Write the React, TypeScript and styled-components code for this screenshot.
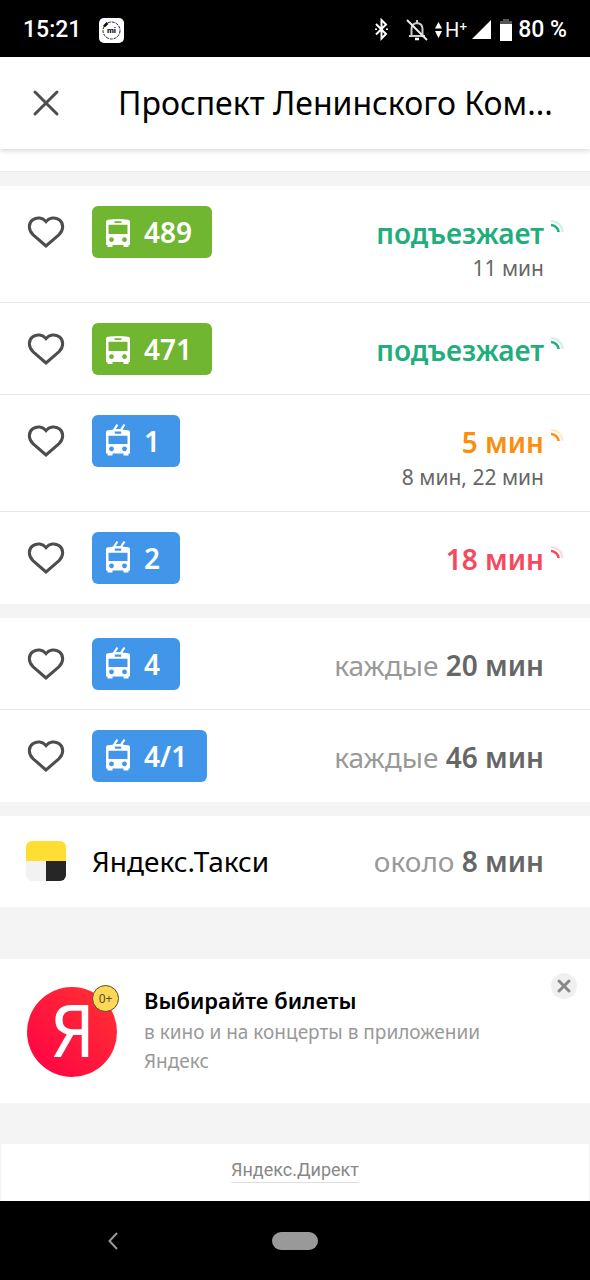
import React from "react";
import styled, { createGlobalStyle } from "styled-components";

const GlobalStyle = createGlobalStyle`
  *, *::before, *::after { box-sizing: border-box; }
  body {
    margin: 0;
    background: #f4f4f4;
    font-family: "Noto Sans", "Open Sans", sans-serif;
    color: #000;
  }
  button { border: 0; padding: 0; background: none; font: inherit; color: inherit; cursor: pointer; }
  svg { display: block; flex: none; }
`;

const Screen = styled.div`
  min-height: 100vh;
  display: flex;
  flex-direction: column;
`;

const StatusBar = styled.div`
  height: 57px;
  display: flex;
  align-items: center;
  justify-content: space-between;
  padding: 3px 23px 0;
  background: #000;
  color: #fff;
  font: 500 23px/28px Roboto, sans-serif;
`;

const StatusGroup = styled.div<{ $gap: number }>`
  display: flex;
  align-items: center;
  gap: ${(p) => p.$gap}px;
`;

const Network = styled.span`
  display: flex;
  align-items: center;
  font-size: 20px;
  line-height: 24px;
  font-weight: 400;
`;

const Header = styled.header`
  position: relative;
  display: flex;
  align-items: center;
  height: 92px;
  padding: 0 32px;
  gap: 58px;
  background: #fff;
  box-shadow: 0 1px 6px rgba(0, 0, 0, 0.2);
`;

const Title = styled.h1`
  flex: 1;
  min-width: 0;
  margin: 0;
  font-size: 32px;
  line-height: 44px;
  font-weight: 400;
  white-space: nowrap;
`;

const Main = styled.main`
  flex: 1;
  display: flex;
  flex-direction: column;
`;

const ListTop = styled.div`
  height: 23px;
  background: #fff;
  border-bottom: 1px solid #ececec;
`;

const Group = styled.ul`
  margin: 14px 0 0;
  padding: 0;
  list-style: none;
  background: #fff;
`;

const Row = styled.li`
  display: flex;
  align-items: flex-start;
  padding: 20px 26px 19px;
  border-bottom: 1px solid #e6e6e6;

  &:last-child { border-bottom-color: transparent; }
`;

const HeartButton = styled.button`
  display: flex;
  align-items: center;
  justify-content: center;
  width: 40px;
  height: 52px;
  margin-right: 26px;
`;

const Badge = styled.span<{ $color: string }>`
  display: flex;
  align-items: center;
  gap: 12px;
  height: 52px;
  padding: 0 20px 0 12px;
  border-radius: 6px;
  background: ${(p) => p.$color};
  color: #fff;
  font-size: 28px;
  line-height: 52px;
  font-weight: 600;
`;

const Times = styled.div`
  display: flex;
  flex-direction: column;
  align-items: flex-end;
  margin-left: auto;
  text-align: right;
`;

const MainTime = styled.span<{ $color: string }>`
  display: flex;
  align-items: center;
  height: 52px;
  padding-top: 2px;
  color: ${(p) => p.$color};
  font-size: 28px;
  font-weight: 600;
  white-space: pre;
`;

const Prefix = styled.span`
  color: #999;
  font-weight: 400;
`;

const NextTime = styled.span`
  height: 25px;
  color: #666;
  font-size: 21px;
  line-height: 20px;
`;

const LiveSlot = styled.span`
  width: 20px;
  padding: 14px 0 0 7px;
`;

const Taxi = styled.section`
  display: flex;
  align-items: center;
  height: 91px;
  margin-top: 14px;
  padding: 0 46px 2px 26px;
  gap: 26px;
  background: #fff;
`;

const TaxiName = styled.span`
  font-size: 28px;
  line-height: 40px;
`;

const TaxiTime = styled(MainTime)`
  margin-left: auto;
  padding-top: 0;
`;

const Promo = styled.section`
  display: flex;
  align-items: flex-start;
  height: 144px;
  margin-top: 52px;
  padding: 14px 13px 0 27px;
  background: #fff;
`;

const Logo = styled.div`
  position: relative;
  display: flex;
  align-items: center;
  justify-content: center;
  width: 90px;
  height: 90px;
  margin: 14px 27px 0 0;
  border-radius: 50%;
  background: linear-gradient(45deg, #ff0047, #ff3430);
  color: #fff;
  font: 400 72px/90px "Liberation Sans Narrow", "DejaVu Sans Condensed", sans-serif;
`;

const AgeMark = styled.span`
  position: absolute;
  top: -2px;
  right: -2px;
  width: 27px;
  height: 27px;
  border: 1px solid #5b4a22;
  border-radius: 50%;
  background: #fcd856;
  color: #5b4a22;
  font: 400 12px/25px "Noto Sans", sans-serif;
  text-align: center;
`;

const PromoText = styled.div`
  flex: 1;
  padding-top: 12px;
`;

const PromoTitle = styled.h2`
  margin: 0;
  font-size: 22px;
  line-height: 30px;
  font-weight: 600;
`;

const PromoBody = styled.p`
  max-width: 350px;
  margin: 3px 0 0;
  color: #999;
  font-size: 19px;
  line-height: 29px;
`;

const PromoClose = styled.button`
  display: flex;
  align-items: center;
  justify-content: center;
  width: 26px;
  height: 26px;
  border-radius: 50%;
  background: #f0f0f0;
`;

const Direct = styled.footer`
  flex: 1;
  display: flex;
  justify-content: center;
  align-items: flex-start;
  margin: 41px 1px 0;
  padding-top: 14px;
  background: #fff;
`;

const DirectLink = styled.a`
  border-bottom: 1px solid #ddd;
  color: #888;
  font: 400 18px/24px Roboto, sans-serif;
  text-decoration: none;
`;

const NavBar = styled.nav`
  display: grid;
  grid-template-columns: 1fr auto 1fr;
  align-items: center;
  height: 79px;
  background: #000;
`;

const BackButton = styled.button`
  justify-self: center;
  margin-right: 46px;
`;

const HomeButton = styled.button`
  width: 46px;
  height: 18px;
  border-radius: 9px;
  background: #999;
`;

const Heart = () => (
  <svg width="38" height="34" viewBox="0 0 38 34" fill="none" stroke="#4d4d4d" strokeWidth="3" strokeLinejoin="miter">
    <path d="M19 31 6.200 19.800C1 15 1.200 8 5.800 4.800 10 1.800 15.800 2.600 19 6.600c3.200-4 9-4.800 13.200-1.800C36.800 8 37 15 31.800 19.800Z" />
  </svg>
);

const BUS_BODY =
  "M2 6.500Q2.300 5 4 4.700 14 3.300 24 4.700 25.700 5 26 6.500V30H24.500V32H19.500V30H8.500V32H3.500V30H2Z" +
  "M10.500 6.300V8H17.500V6.300ZM4.500 9.800V19H23.500V9.800Z" +
  "M7.500 22.200a2.400 2.400 0 1 0 .01 0ZM20.500 22.200a2.400 2.400 0 1 0 .01 0Z";

const TROLLEY_BODY =
  "M2 8Q2 6.400 4 6.200L8.500 5.800 9.500 5H18.500L19.500 5.800 24 6.200Q26 6.400 26 8V29.500H24.500V31.500H19.500V29.500H8.500V31.500H3.500V29.500H2Z" +
  "M10.800 7.500V9.700H17.200V7.500ZM4.500 11.700V20H23.500V11.700Z" +
  "M7.500 22.400a2.400 2.400 0 1 0 .01 0ZM20.500 22.400a2.400 2.400 0 1 0 .01 0Z";

const BusIcon = ({ trolley }: { trolley: boolean }) => (
  <svg width="28" height="34" viewBox="0 0 28 34">
    {trolley && (
      <path d="M10 6 11.800 2.800H12.200L13.300 .5M17 6 18.800 2.800H19.200L20.500 .5" stroke="#fff" strokeWidth="2" fill="none" />
    )}
    <path fill="#fff" fillRule="evenodd" d={trolley ? TROLLEY_BODY : BUS_BODY} />
  </svg>
);

const LiveIcon = ({ color }: { color: string }) => (
  <svg width="13" height="13" viewBox="0 0 13 13" fill="none" stroke={color}>
    <path d="M0 5A8 7.500 0 0 1 7.500 12" strokeWidth="2.600" />
    <path d="M0 1A11.500 11 0 0 1 11.500 12" strokeWidth="2" opacity="0.2" />
  </svg>
);

const Cross = ({ size, color, weight }: { size: number; color: string; weight: number }) => (
  <svg width={size} height={size} viewBox={`0 0 ${size} ${size}`} stroke={color} strokeWidth={weight} strokeLinecap="round">
    <path d={`M3 3L${size - 3} ${size - 3}M${size - 3} 3L3 ${size - 3}`} />
  </svg>
);

const GREEN = "#70b631";
const BLUE = "#4196ea";

type Route = {
  name: string;
  trolley: boolean;
  prefix?: string;
  time: string;
  color: string;
  live: boolean;
  next?: string;
};

const liveRoutes: Route[] = [
  { name: "489", trolley: false, time: "подъезжает", color: "#1fae7c", live: true, next: "11 мин" },
  { name: "471", trolley: false, time: "подъезжает", color: "#1fae7c", live: true },
  { name: "1", trolley: true, time: "5 мин", color: "#f98f0c", live: true, next: "8 мин, 22 мин" },
  { name: "2", trolley: true, time: "18 мин", color: "#f5495d", live: true },
];

const plannedRoutes: Route[] = [
  { name: "4", trolley: true, prefix: "каждые ", time: "20 мин", color: "#666", live: false },
  { name: "4/1", trolley: true, prefix: "каждые ", time: "46 мин", color: "#666", live: false },
];

const RouteRow = ({ route }: { route: Route }) => (
  <Row>
    <HeartButton aria-label={`В избранное: ${route.name}`}>
      <Heart />
    </HeartButton>
    <Badge $color={route.trolley ? BLUE : GREEN}>
      <BusIcon trolley={route.trolley} />
      {route.name}
    </Badge>
    <Times>
      <MainTime $color={route.color}>
        {route.prefix && <Prefix>{route.prefix}</Prefix>}
        {route.time}
      </MainTime>
      {route.next && <NextTime>{route.next}</NextTime>}
    </Times>
    <LiveSlot>{route.live && <LiveIcon color={route.color} />}</LiveSlot>
  </Row>
);

export default function App() {
  return (
    <Screen>
      <GlobalStyle />
      <StatusBar>
        <StatusGroup $gap={18}>
          <span>15:21</span>
          <svg width="25" height="25" viewBox="0 0 25 25">
            <rect width="25" height="25" rx="5" fill="#fff" />
            <circle cx="12.500" cy="12.500" r="8.500" fill="none" stroke="#222" strokeWidth="1" strokeDasharray="3 1" />
            <path d="M5 8.500 8.500 5" stroke="#111" strokeWidth="2.500" />
            <text x="12.500" y="15" textAnchor="middle" fontFamily="Roboto, sans-serif" fontSize="8" fontWeight="900" fill="#222">mi</text>
          </svg>
        </StatusGroup>
        <StatusGroup $gap={5}>
          <svg width="26" height="24" viewBox="0 0 26 24" fill="none" stroke="#fff" strokeWidth="2">
            <path d="M2 6 12 16 7.500 20.500V2L12 6.500 2 16.500" />
            <path d="M2 10.500v1.500M13 10.500v1.500" />
          </svg>
          <svg width="24" height="24" viewBox="0 0 24 24" fill="none" stroke="#ccc" strokeWidth="2">
            <path d="M4 18H20M6.500 18V11Q6.500 5.500 12 5 17.500 5.500 17.500 11V18M12 2V5" />
            <path d="M10 21h4" stroke="#fff" strokeWidth="2.500" />
            <path d="M2 2 22 22" stroke="#eee" />
          </svg>
          <Network>
            <svg width="11" height="18" viewBox="0 0 11 18" fill="#fff">
              <path d="M1 7.500 4.500 1 8 7.500ZM1 10 4.500 17 8 10Z" />
            </svg>
            H⁺
          </Network>
          <svg width="20" height="20" viewBox="0 0 20 20" fill="#fff">
            <path d="M0 19 19 0V19Z" />
          </svg>
          <svg width="16" height="22" viewBox="0 0 16 22">
            <path d="M3 6V2H6V0H12V2H15V6Z" fill="#555" />
            <path d="M3 5H15V22H3Z" fill="#fff" />
          </svg>
          <span>80 %</span>
        </StatusGroup>
      </StatusBar>
      <Header>
        <button aria-label="Закрыть">
          <Cross size={28} color="#4d4d4d" weight={3} />
        </button>
        <Title>Проспект Ленинского Ком...</Title>
      </Header>
      <Main>
        <ListTop />
        <Group>
          {liveRoutes.map((r) => (
            <RouteRow key={r.name} route={r} />
          ))}
        </Group>
        <Group>
          {plannedRoutes.map((r) => (
            <RouteRow key={r.name} route={r} />
          ))}
        </Group>
        <Taxi>
          <svg width="40" height="40" viewBox="0 0 40 40">
            <clipPath id="taxi"><rect width="40" height="40" rx="6" /></clipPath>
            <g clipPath="url(#taxi)">
              <rect width="40" height="20" fill="#ffde33" />
              <rect y="20" width="20" height="20" fill="#f2f2f2" />
              <rect x="20" y="20" width="20" height="20" fill="#262626" />
            </g>
          </svg>
          <TaxiName>Яндекс.Такси</TaxiName>
          <TaxiTime $color="#666">
            <Prefix>около </Prefix>8 мин
          </TaxiTime>
        </Taxi>
        <Promo>
          <Logo>
            Я<AgeMark>0+</AgeMark>
          </Logo>
          <PromoText>
            <PromoTitle>Выбирайте билеты</PromoTitle>
            <PromoBody>в кино и на концерты в приложении Яндекс</PromoBody>
          </PromoText>
          <PromoClose aria-label="Скрыть">
            <Cross size={16} color="#888" weight={3} />
          </PromoClose>
        </Promo>
        <Direct>
          <DirectLink href="#direct">Яндекс.Директ</DirectLink>
        </Direct>
      </Main>
      <NavBar>
        <BackButton aria-label="Назад">
          <svg width="12" height="18" viewBox="0 0 12 18" fill="none" stroke="#999" strokeWidth="2">
            <path d="M10 1 2.500 9 10 17" />
          </svg>
        </BackButton>
        <HomeButton aria-label="Домой" />
      </NavBar>
    </Screen>
  );
}
